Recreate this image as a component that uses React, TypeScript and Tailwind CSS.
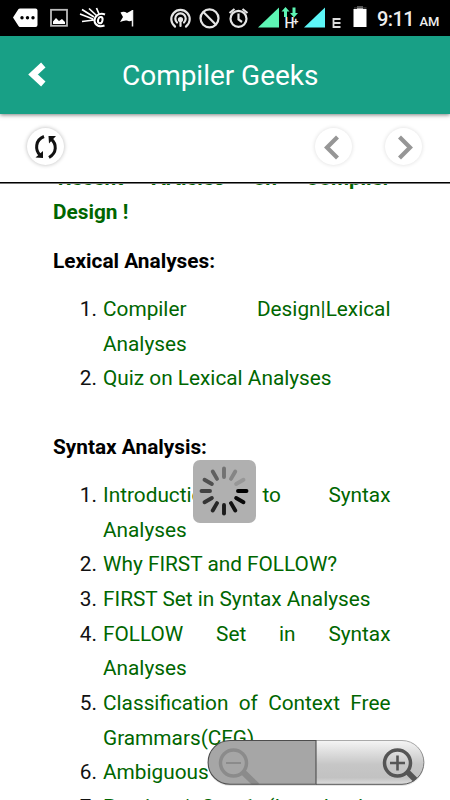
import React from "react";

type Row = { n?: string; t: string; j?: boolean };

function Line({ n, t, j }: Row) {
  return (
    <div className="flex h-[34.65px] items-center whitespace-nowrap leading-[34.65px]">
      <span className="w-[50px] shrink-0 pr-[6px] text-right text-[#111]">{n}</span>
      <span className={j ? "flex grow justify-between text-[#006600]" : "text-[#006600]"}>
        {j ? t.split(" ").map((w, i) => <span key={i}>{w}</span>) : t}
      </span>
    </div>
  );
}

const lexical: Row[] = [
  { n: "1.", t: "Compiler Design|Lexical", j: true },
  { t: "Analyses" },
  { n: "2.", t: "Quiz on Lexical Analyses" },
];

const syntax: Row[] = [
  { n: "1.", t: "Introduction to Syntax", j: true },
  { t: "Analyses" },
  { n: "2.", t: "Why FIRST and FOLLOW?" },
  { n: "3.", t: "FIRST Set in Syntax Analyses" },
  { n: "4.", t: "FOLLOW Set in Syntax", j: true },
  { t: "Analyses" },
  { n: "5.", t: "Classification of Context Free", j: true },
  { t: "Grammars(CFG)" },
  { n: "6.", t: "Ambiguous Grammar" },
  { n: "7.", t: "Parsing | Set 1 (Introduction,", j: true },
];

function StatusBar() {
  return (
    <div className="h-9 shrink-0 bg-black">
      <svg width="450" height="36" viewBox="0 0 450 36" fill="none">
        <path d="M13 17.5L18.5 9Q19 8.500 20 8.500H35.500Q37.500 8.500 37.500 10.500V25Q37.500 27 35.500 27H20Q19 27 18.500 26Z" fill="#fff" />
        <g fill="#000"><circle cx="22" cy="17.700" r="1.700" /><circle cx="27.500" cy="17.700" r="1.700" /><circle cx="33" cy="17.700" r="1.700" /></g>
        <rect x="51" y="9.800" width="16" height="16" stroke="#bbb" strokeWidth="1.800" />
        <path d="M53 24V21.500L56 18L59 21L62 19L65 22V24Z" fill="#fff" />
        <g stroke="#fff" strokeWidth="1.700"><path d="M82 9.500L94 17M89 8.500L97 16M96.500 8L99 14M80 14L93 19M82 21.500L94 20" /><path d="M105 14.500C99 12 94 17 94.500 21C95 26 100 27 104.500 25.500" strokeWidth="2" /><ellipse cx="100.300" cy="20" rx="2.200" ry="3.200" transform="rotate(15 100 20)" strokeWidth="2" /></g>
        <path d="M120.500 12.500Q124 11 127 13L132.500 10V20.500Q129 22 127 20.500Q124 20 120 22L123 17Z" fill="#fff" /><path d="M132.500 10V26.500" stroke="#eee" strokeWidth="1.500" />
        <g stroke="#e5e5e5" strokeWidth="2.200" strokeLinecap="round"><path d="M175 26.500A9.200 9.200 0 1 1 186 26.500M177 22.500A5.200 5.200 0 1 1 184 22.500" /><circle cx="180.500" cy="19.500" r="1.500" fill="#fff" /><path d="M180.500 20V26" /></g>
        <circle cx="209.500" cy="18.300" r="9" stroke="#e5e5e5" strokeWidth="2.200" /><path d="M203.300 12L215.700 24.500" stroke="#e5e5e5" strokeWidth="2.200" />
        <g stroke="#e5e5e5" strokeWidth="2.200"><circle cx="238.500" cy="18.800" r="8" /><path d="M238.500 13.500V19.500L242 22M229.500 13L234.500 9M242.500 9L247.500 13" /></g>
        <path d="M258 27.500L279 7.500V27.500Z" fill="#5df5b4" />
        <path d="M285.500 7L289.500 11.500H287V17H284V11.500H281.500ZM294 17.500L298 13H295.500V7.500H292.500V13H290Z" fill="#5df5b4" />
        <path d="M304 27.500L325 7.500V27.500Z" fill="#5cf6f7" />
        <path d="M357 9V7.500H363V9H366.500V27H353.500V9Z" fill="#fff" /><path d="M354 8.500V7.500H357V6H363V7.500H366.500V8.500Z" fill="#555" />
        <g fontFamily="Roboto, sans-serif" fill="#eee"><text x="284.500" y="28" fontSize="14" fontWeight="500">H</text><text x="293" y="25" fontSize="10" fontWeight="700">+</text><text x="377" y="25.500" fontSize="20" fontWeight="500" textLength="37.500">9:11</text><text x="419.500" y="25.500" fontSize="13.500" fontWeight="500" textLength="20" lengthAdjust="spacingAndGlyphs">AM</text></g>
        <path d="M340.500 19H333.500V27H340.500M333.500 23H340.500" stroke="#ddd" strokeWidth="1.800" />
      </svg>
    </div>
  );
}

function Spinner() {
  const shades = ["#000", "#080808", "#121212", "#1b1b1b", "#282828", "#343434", "#424242", "#505050", "#606060", "#727272", "#858585", "#979797"];
  return (
    <div className="absolute left-[193px] top-[460px] size-[63px] rounded-[7px] bg-[#b0b0b0]">
      <svg width="63" height="63" viewBox="0 0 63 63">
        {shades.map((c, i) => (
          <path key={i} d="M45 31H53.500" stroke={c} strokeWidth="3.900" strokeLinecap="round" transform={`rotate(${i * 30} 31 31)`} />
        ))}
      </svg>
    </div>
  );
}

function ZoomControls() {
  return (
    <svg className="absolute left-[206px] top-[738px]" width="220" height="50" viewBox="0 0 220 50" fill="none">
      <defs>
        <linearGradient id="zoomIn" x1="0" y1="0" x2="0" y2="1"><stop stopColor="#f5f5f5" /><stop offset=".55" stopColor="#c6c6c6" /><stop offset=".85" stopColor="#c2c2c2" /><stop offset="1" stopColor="#ddd" /></linearGradient>
        <linearGradient id="edge" x1="0" y1="0" x2="0" y2="1"><stop stopColor="#aaa" /><stop offset="1" stopColor="#555" /></linearGradient>
        <clipPath id="pill"><path d="M24 2.500H196A21.700 21.700 0 0 1 196 46.300H24A21.700 21.700 0 0 1 24 2.500Z" /></clipPath>
      </defs>
      <path d="M24 4H196A21.500 21.500 0 0 1 196 48H24A21.500 21.500 0 0 1 24 4Z" fill="#bbb" opacity=".4" />
      <path d="M110 2.500H196A21.700 21.700 0 0 1 196 46.300H110Z" fill="url(#zoomIn)" />
      <path d="M110 2.500H24A21.700 21.700 0 0 0 24 46.300H110Z" fill="#a6a6a6" />
      <g clipPath="url(#pill)">
        <g stroke="#8b8b8b"><circle cx="27.500" cy="25" r="13" strokeWidth="3.500" /><path d="M20 25H35" strokeWidth="2" /><path d="M37 34L51 47.500" strokeWidth="6" /></g>
        <g stroke="#555"><circle cx="191.500" cy="25" r="13" strokeWidth="3.500" /><path d="M184 25H199M191.500 17.500V32.500" strokeWidth="2.600" /><path d="M201 33.500L209.500 42" strokeWidth="5.500" /></g>
      </g>
      <path d="M110 2.500H196A21.700 21.700 0 0 1 196 46.300H110" stroke="url(#edge)" />
      <path d="M110 2.500H24A21.700 21.700 0 0 0 24 46.300H110Z" stroke="#4d4d4d" strokeWidth="1.100" />
    </svg>
  );
}

export default function App() {
  return (
    <div className="relative flex h-[800px] w-[450px] flex-col overflow-hidden bg-white font-[Roboto,sans-serif]">
      <StatusBar />
      <header className="z-10 flex h-[78px] shrink-0 items-center bg-[#18a086] shadow-[0_1px_4px_rgba(0,0,0,0.5)]">
        <svg className="ml-[28px] shrink-0" width="20" height="28" viewBox="0 0 20 28"><path d="M15.300 4L5 13.500L15.300 23" fill="none" stroke="#fff" strokeWidth="6.500" /></svg>
        <h1 className="ml-[74px] mt-[2px] whitespace-nowrap text-[28px] leading-8 tracking-[-0.030px] text-white">Compiler Geeks</h1>
      </header>
      <div className="flex h-[70px] shrink-0 items-center pb-[5px] shadow-[inset_0_-1px_0_#777,inset_0_-2px_0_#000]">
        <div className="ml-[27px] flex size-[37px] items-center justify-center rounded-full shadow-[0_0_4px_rgba(0,0,0,0.28)]">
          <svg width="26" height="26" viewBox="0 0 26 26" fill="none" stroke="#111" strokeWidth="3"><path d="M11 2.500C2 6 2 16 7 21M16 23.500C24 19 24 10 18 5" /><path d="M2.500 23.500L10 17V24ZM15.500 2H23L16 9.500Z" fill="#111" stroke="none" /></svg>
        </div>
        <div className="ml-[251px] flex size-[37px] items-center justify-center rounded-full shadow-[0_0_4px_rgba(0,0,0,0.14)]">
          <svg width="24" height="26" viewBox="0 0 24 26" fill="none" stroke="#969696" strokeWidth="4.200"><path d="M15.500 3L5 13.500L15.500 24" /></svg>
        </div>
        <div className="ml-[33px] flex size-[37px] items-center justify-center rounded-full shadow-[0_0_4px_rgba(0,0,0,0.14)]">
          <svg width="24" height="26" viewBox="0 0 24 26" fill="none" stroke="#969696" strokeWidth="4.200"><path d="M7.500 3L18 13.500L7.500 24" /></svg>
        </div>
      </div>
      <main className="min-h-0 flex-1 overflow-hidden pl-[53px] pr-[59.500px] text-[20.800px]">
        <div className="-mt-[23.500px] font-bold leading-[34.65px] text-[#006600]">
          <div className="flex justify-between"><span>‘Recent</span><span>Articles</span><span>on</span><span>Compiler</span></div>
          <div>Design !</div>
        </div>
        <h2 className="mt-[14px] font-bold leading-[34.65px]">Lexical Analyses:</h2>
        <div className="mt-[13.500px]">{lexical.map((r, i) => <Line key={i} {...r} />)}</div>
        <h2 className="mt-[34px] font-bold leading-[34.65px]">Syntax Analysis:</h2>
        <div className="mt-[13.500px]">{syntax.map((r, i) => <Line key={i} {...r} />)}</div>
      </main>
      <Spinner />
      <ZoomControls />
    </div>
  );
}
